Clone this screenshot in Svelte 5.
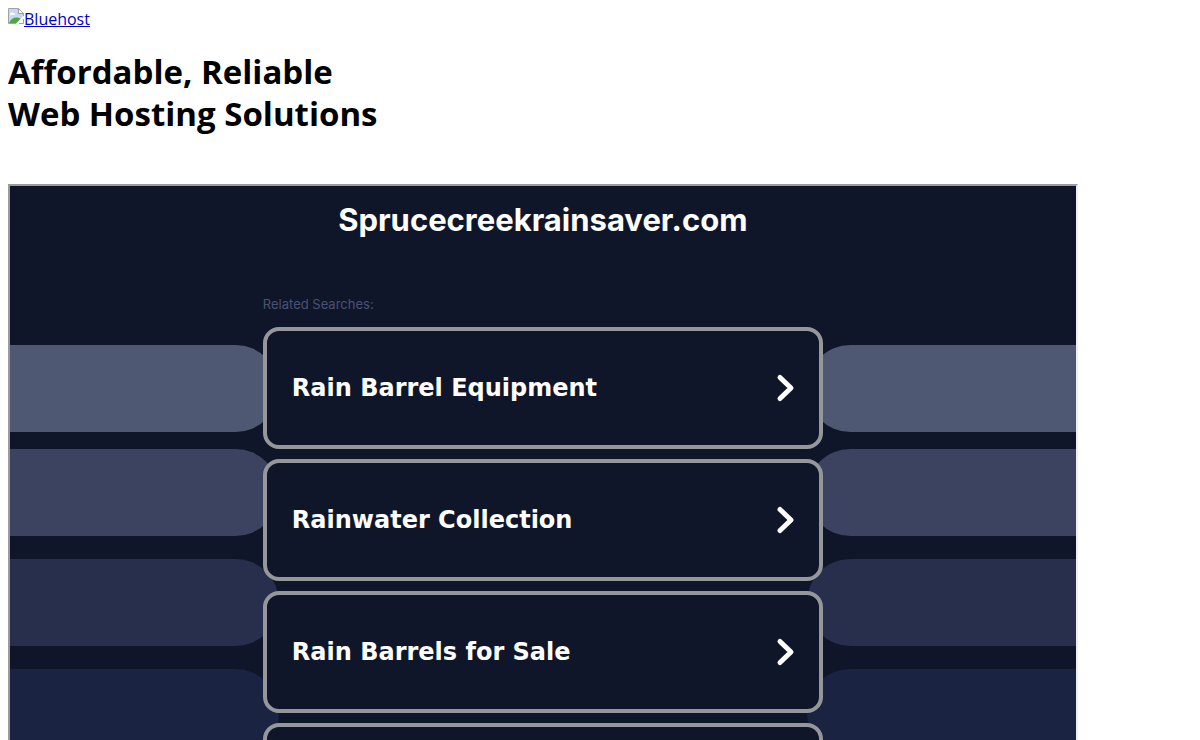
<script lang="ts">
	let domain = 'Sprucecreekrainsaver.com';
	let searches = ['Rain Barrel Equipment', 'Rainwater Collection', 'Rain Barrels for Sale', ''];
	let sides = ['left', 'right'];
	let shades = ['slate', 'steel', 'navy', 'night'];
</script>

<div class="page">
	<a class="logo" href="#home">
		<svg width="16" height="16" viewBox="0 0 16 16" aria-hidden="true">
			<path d="M0.5 0.5H10.5L15.5 5.5V9L9 15.5H0.5Z" fill="#c6d8f4" />
			<path d="M2 6.5C2 4.500 4 4 5 5C7 4.500 7.500 6.500 6.500 7H2Z" fill="#fff" />
			<path d="M1 15C3 10 8 8 13 11L9 15Z" fill="#4ea83a" />
			<path d="M15.500 8L8 15.500H10L15.500 10Z" fill="#fff" />
			<path d="M10.500 0.500V5.500H15.500Z" fill="#fff" stroke="#9a9a9a" />
			<path d="M15.500 8V5.500L10.500 0.500H0.500V15.500H8M11 15.500H15.500V11" fill="none" stroke="#a3a3a3" />
		</svg><span>Bluehost</span>
	</a>

	<h1>Affordable, Reliable<br />Web Hosting Solutions</h1>

	<div class="frame">
		<h2>{domain}</h2>
		<div class="content">
			{#each sides as side}
				<div class="pills {side}">
					{#each shades as shade}
						<div class="pill {shade}"></div>
					{/each}
				</div>
			{/each}
			<div class="related">
				<p>Related Searches:</p>
				<ul>
					{#each searches as search}
						<li>
							<a class="card" href="#search">
								<span>{search}</span>
								<svg width="18" height="28" viewBox="0 0 18 28" aria-hidden="true">
									<path d="M4 3.500L15 14L4 24.500" />
								</svg>
							</a>
						</li>
					{/each}
				</ul>
			</div>
		</div>
	</div>
</div>

<style>
	.page {
		box-sizing: border-box;
		height: 100vh;
		overflow: hidden;
		padding: 8px;
		background-color: white;
		font-family: 'Open Sans', 'Noto Sans', sans-serif;
	}

	.logo {
		display: flex;
		width: max-content;
		font-size: 16px;
		line-height: 22px;
		color: #0000cc;
	}

	h1 {
		margin: 21px 0 49px;
		font-size: 33px;
		font-weight: 700;
		line-height: 42px;
		color: black;
	}

	.frame {
		width: 90%;
		border: 2px solid;
		border-color: #999b9f #eeeef4 #eeeef4 #999b9f;
		background-color: #10162a;
	}

	h2 {
		margin: 0;
		padding: 14px 0 50px;
		font-family: Inter, sans-serif;
		font-size: 31px;
		font-weight: 700;
		line-height: 40px;
		text-align: center;
		color: white;
	}

	.content {
		display: grid;
		grid-template-columns: 1fr 560px 1fr;
	}

	.pills {
		grid-row: 1;
		display: flex;
		flex-direction: column;
		gap: 23px;
		padding-top: 55px;
	}

	.left {
		grid-column: 1;
		margin-right: -16px;
	}

	.right {
		grid-column: 3;
		margin-left: -16px;
	}

	.pill {
		height: 87px;
	}

	.left .pill {
		border-radius: 0 44px 44px 0;
	}

	.right .pill {
		border-radius: 44px 0 0 44px;
	}

	.slate {
		margin-bottom: -6px;
		background-color: #4f5872;
	}

	.steel {
		background-color: #3b4361;
	}

	.navy {
		background-color: #272f4d;
	}

	.night {
		background-color: #1b2342;
	}

	.related {
		grid-row: 1;
		grid-column: 2;
		z-index: 1;
	}

	p {
		margin: 0;
		padding: 5px 0 14px;
		font-family: Inter, sans-serif;
		font-size: 13px;
		line-height: 18px;
		color: #4a5272;
	}

	ul {
		display: flex;
		flex-direction: column;
		gap: 10px;
		margin: 0;
		padding: 0;
		list-style: none;
	}

	.card {
		display: flex;
		justify-content: space-between;
		align-items: center;
		box-sizing: border-box;
		height: 122px;
		padding: 0 25px;
		border: 4px solid #96979b;
		border-radius: 16px;
		background-color: #10162a;
		font-family: 'DejaVu Sans', sans-serif;
		font-size: 24px;
		font-weight: 700;
		color: white;
		text-decoration: none;
	}

	.card svg {
		overflow: visible;
		fill: none;
		stroke: white;
		stroke-width: 5;
		stroke-linecap: round;
		stroke-linejoin: round;
	}
</style>
